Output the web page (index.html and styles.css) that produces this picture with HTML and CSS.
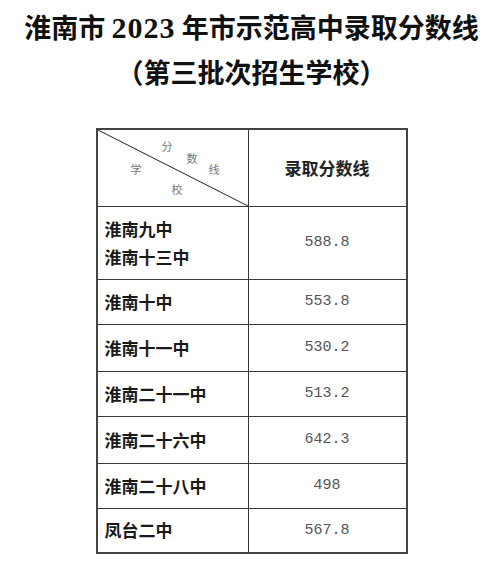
FILE: index.html
```html
<!DOCTYPE html>
<html lang="zh-CN">
<head>
<meta charset="utf-8">
<title>淮南市2023年市示范高中录取分数线</title>
<link rel="stylesheet" href="styles.css">
</head>
<body>
<h1 class="title">
  <span class="line">淮南市 <span class="num">2023</span> 年市示范高中录取分数线</span>
  <span class="line">（第三批次招生学校）</span>
</h1>
<table class="scores">
  <thead>
    <tr class="head-row">
      <th class="corner">
        <span class="lbl l-fen">分</span>
        <span class="lbl l-shu">数</span>
        <span class="lbl l-xian">线</span>
        <span class="lbl l-xue">学</span>
        <span class="lbl l-xiao">校</span>
      </th>
      <th class="col-head">录取分数线</th>
    </tr>
  </thead>
  <tbody>
    <tr class="row-tall"><td class="school">淮南九中<br>淮南十三中</td><td class="score">588.8</td></tr>
    <tr class="row-a"><td class="school">淮南十中</td><td class="score">553.8</td></tr>
    <tr class="row-b"><td class="school">淮南十一中</td><td class="score">530.2</td></tr>
    <tr class="row-a"><td class="school">淮南二十一中</td><td class="score">513.2</td></tr>
    <tr class="row-b"><td class="school">淮南二十六中</td><td class="score">642.3</td></tr>
    <tr class="row-a"><td class="school">淮南二十八中</td><td class="score">498</td></tr>
    <tr class="row-a"><td class="school">凤台二中</td><td class="score">567.8</td></tr>
  </tbody>
</table>
</body>
</html>
```

FILE: styles.css
```css
html, body {
  margin: 0;
  padding: 0;
  background: #ffffff;
}
body {
  width: 503px;
  height: 564px;
  overflow: hidden;
  font-family: "Noto Sans CJK SC", "Liberation Serif", serif;
  color: #1a1a1a;
}
.title {
  margin: 0;
  padding-top: 5px;
  display: flex;
  flex-direction: column;
  align-items: center;
  font-size: 27px;
  line-height: 44px;
  font-weight: 700;
  color: #111;
}
.title .line {
  display: block;
  white-space: nowrap;
}
.title .num {
  font-family: "Liberation Serif", serif;
  font-size: 30px;
  letter-spacing: 1px;
}
.scores {
  margin: 34px auto 0;
  border-collapse: collapse;
  border: 2px solid #444;
}
.scores th, .scores td {
  border: 1.5px solid #3a3a3a;
  padding: 0;
}
.head-row {
  height: 77px;
}
.corner {
  position: relative;
  width: 150px;
  background: linear-gradient(to top right, transparent calc(50% - 1px), #333 50%, transparent calc(50% + 1px));
}
.col-head {
  width: 157px;
  font-size: 17px;
  font-weight: 700;
  color: #222;
  text-align: center;
}
.lbl {
  position: absolute;
  font-size: 11px;
  line-height: 11px;
  font-weight: 400;
  color: #777;
}
.l-fen { left: 64px; top: 11px; }
.l-shu { left: 89px; top: 23px; }
.l-xian { left: 111px; top: 34px; }
.l-xue { left: 33px; top: 34px; }
.l-xiao { left: 74px; top: 54px; }
.row-tall { height: 73px; }
.row-a { height: 45px; }
.row-b { height: 47px; }
.school {
  padding-left: 7px !important;
  font-size: 17px;
  line-height: 28px;
  font-weight: 700;
  color: #1a1a1a;
  text-align: left;
}
.score {
  text-align: center;
  font-family: "Liberation Mono", monospace;
  font-size: 15px;
  color: #555;
}
```
